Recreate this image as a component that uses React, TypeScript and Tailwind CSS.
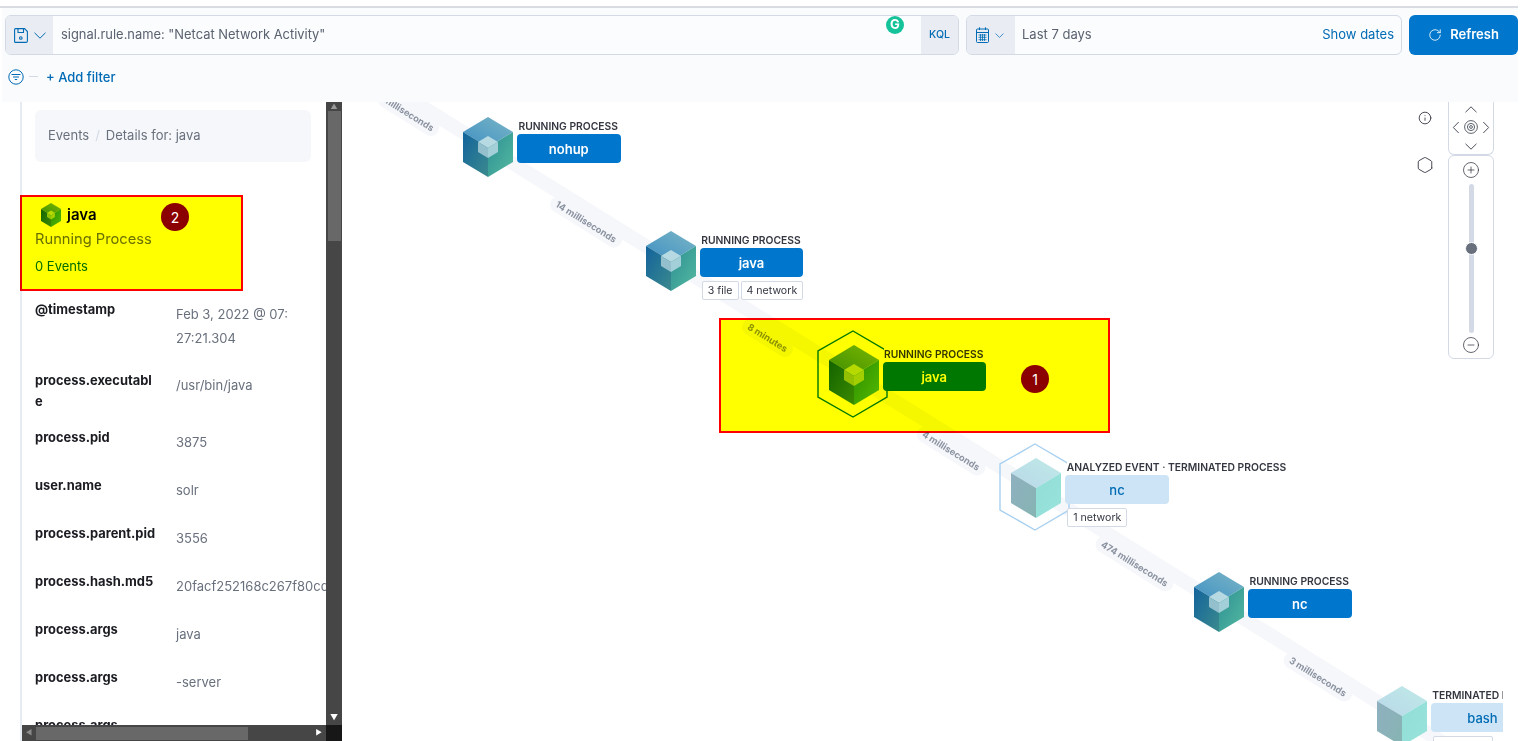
import { RotateCw, Info, Hexagon, CirclePlus, CircleMinus } from "lucide-react";

const details = [
  { label: "@timestamp", value: "Feb 3, 2022 @ 07:27:21.304", row: "h-[71px]", val: "w-[118px] break-all" },
  { label: "process.executable", value: "/usr/bin/java", row: "h-[57px]", val: "" },
  { label: "process.pid", value: "3875", row: "h-[48px]", val: "" },
  { label: "user.name", value: "solr", row: "h-[48px]", val: "" },
  { label: "process.parent.pid", value: "3556", row: "h-[48px]", val: "" },
  { label: "process.hash.md5", value: "20facf252168c267f80cd", row: "h-[48px]", val: "whitespace-nowrap" },
  { label: "process.args", value: "java", row: "h-[48px]", val: "" },
  { label: "process.args", value: "-server", row: "h-[48px]", val: "" },
  { label: "process.args", value: "-Xms512m", row: "h-[48px]", val: "" },
];

const palettes: any = {
  running: { top: ["#3f8fc3", "#7ab6c6"], left: ["#12639c", "#3b8a8e"], right: ["#2c8f94", "#55b9a0"], core: true },
  terminated: { top: ["#b9d8ea", "#bfeae6"], left: ["#8fb0c0", "#86b4b2"], right: ["#92dfd8", "#98e2da"], core: false },
};

function Cube({ id, kind, className }: { id: string; kind: string; className?: string }) {
  const p = palettes[kind];
  return (
    <svg viewBox="0 0 50 60" className={className}>
      <defs>
        <linearGradient id={id + "t"} x1="0" y1="1" x2="1" y2="0">
          <stop offset="0" stopColor={p.top[0]} />
          <stop offset="1" stopColor={p.top[1]} />
        </linearGradient>
        <linearGradient id={id + "l"} x1="0" y1="0" x2="1" y2="1">
          <stop offset="0" stopColor={p.left[0]} />
          <stop offset="1" stopColor={p.left[1]} />
        </linearGradient>
        <linearGradient id={id + "r"} x1="0" y1="0" x2="1" y2="1">
          <stop offset="0" stopColor={p.right[0]} />
          <stop offset="1" stopColor={p.right[1]} />
        </linearGradient>
      </defs>
      <path d="M25 0 L50 15 L25 30 L0 15 Z" fill={`url(#${id}t)`} />
      <path d="M0 15 L25 30 L25 60 L0 45 Z" fill={`url(#${id}l)`} />
      <path d="M50 15 L25 30 L25 60 L50 45 Z" fill={`url(#${id}r)`} />
      {p.core && (
        <g>
          <path d="M25 19 L35 25 L25 31 L15 25 Z" fill="#b6d9e2" />
          <path d="M15 25 L25 31 L25 41 L15 35 Z" fill="#93c0cc" />
          <path d="M35 25 L25 31 L25 41 L35 35 Z" fill="#a3cfd8" />
        </g>
      )}
    </svg>
  );
}

function Node({ id, pos, kind, label, name, badges, ring, dim }: any) {
  return (
    <div className={"absolute flex " + pos}>
      {ring && (
        <svg viewBox="0 0 74 90" className="absolute left-[-13px] top-[-15px] h-[90px] w-[74px]" fill="none" stroke={ring} strokeWidth="1.4">
          <path d="M37 1 L71 21 L71 67 L37 87 L2 67 L2 21 Z" />
        </svg>
      )}
      <Cube id={id} kind={kind} className="relative h-[60px] w-[50px] shrink-0" />
      <div className="relative ml-[4px] flex w-[103.5px] flex-col items-start">
        <span className="ml-[1.5px] mt-[2px] h-[15px] whitespace-nowrap bg-white text-[10.3px] font-semibold leading-[15px] text-[#343741]">{label}</span>
        <div className={"flex h-[29px] w-[103.5px] items-center justify-center rounded-[4px] pt-[2px] text-[13px] " + (dim ? "bg-[#cce4f5] font-medium text-[#006bb4]" : "bg-[#0077cc] font-semibold text-white")}>
          {name}
        </div>
        {badges && (
          <div className="ml-[2px] mt-[4px] flex gap-[2px]">
            {badges.map((b: string) => (
              <span key={b} className="h-[19px] whitespace-nowrap rounded-[2px] border border-[#d3dae6] bg-white px-[5px] text-[10.6px] leading-[17px] text-[#343741]">{b}</span>
            ))}
          </div>
        )}
      </div>
    </div>
  );
}

function EdgeLabel({ text, pos }: { text: string; pos: string }) {
  return (
    <span className={"absolute rotate-[32deg] whitespace-nowrap rounded-full bg-[#f5f7fa] px-[6px] text-[9.3px] font-bold leading-[16px] text-[#8c93a1] " + pos}>
      {text}
    </span>
  );
}

function Chev({ className }: { className: string }) {
  return (
    <svg viewBox="0 0 12 7" className={className} fill="none" stroke="currentColor" strokeWidth="1">
      <path d="M0.5 6.2 L6 0.8 L11.5 6.2" />
    </svg>
  );
}

export default function App() {
  return (
    <div className="relative h-[741px] w-[1528px] overflow-hidden bg-white font-['Inter',sans-serif]">
      <div className="h-[6px]" />
      <div className="ml-0 h-[2px] w-[1518px] bg-[#d9dce3]" />

      {/* query bar */}
      <div className="relative ml-[2px] h-[94px] w-[1516px] bg-[#fafbfd] pl-[3px] pt-[7px]">
        <div className="flex gap-[7px]">
          <div className="flex h-[40px] w-[954px] overflow-hidden rounded-[6px] border border-[#d3dae6] bg-[#fbfcfd]">
            <div className="flex w-[47px] items-center gap-[6px] bg-[#e9edf3] pl-[8px] text-[#006bb4]">
              <svg viewBox="0 0 14 15" className="h-[15px] w-[14px]" fill="none" stroke="currentColor" strokeWidth="1.1">
                <path d="M1.5 0.6 H10.5 L13.4 3.5 V13 Q13.4 14.4 12 14.4 H1.5 Q0.6 14.4 0.6 13.4 V1.6 Q0.6 0.6 1.5 0.6 Z" />
                <path d="M4 0.6 V4.5 H9.5 V0.6" />
                <circle cx="6.8" cy="10" r="1.3" />
              </svg>
              <Chev className="h-[7px] w-[12px] rotate-180" />
            </div>
            <div className="flex flex-1 items-center pl-[8px] text-[12.9px] text-[#5a6270]">signal.rule.name: "Netcat Network Activity"</div>
            <div className="flex w-[37px] items-center justify-center bg-[#e9edf3] text-[10.5px] font-medium text-[#006bb4]">KQL</div>
          </div>
          <div className="flex h-[40px] w-[436px] overflow-hidden rounded-[6px] border border-[#d3dae6] bg-[#fbfcfd]">
            <div className="flex w-[48px] items-center gap-[6px] bg-[#e9edf3] pl-[9px] text-[#006bb4]">
              <svg viewBox="0 0 13 16" className="h-[16px] w-[13px]" fill="none" stroke="currentColor" strokeWidth="1">
                <rect x="0.5" y="2" width="12" height="13.5" rx="1" />
                <path d="M0.5 5.5 H12.5 M3.5 0.3 V3 M9.5 0.3 V3" />
                <path d="M2.5 8 H10.5 M2.5 10.3 H10.5 M2.5 12.7 H10.5 M4.5 7 V14 M6.5 7 V14 M8.5 7 V14" strokeWidth="0.8" />
              </svg>
              <Chev className="h-[5px] w-[9px] rotate-180" />
            </div>
            <div className="flex flex-1 items-center justify-between px-[7px] text-[13px]">
              <span className="text-[#5a6270]">Last 7 days</span>
              <span className="text-[#006bb4]">Show dates</span>
            </div>
          </div>
          <button className="flex h-[40px] w-[109px] items-center justify-center gap-[8px] rounded-[6px] bg-[#0077cc] text-[13px] font-semibold text-white">
            <RotateCw size={14} strokeWidth={1.4} />
            Refresh
          </button>
        </div>
        <div className="ml-[3px] mt-[11px] flex items-center">
          <svg viewBox="0 0 16 16" className="h-[16px] w-[16px] text-[#006bb4]" fill="none" stroke="currentColor" strokeWidth="1">
            <circle cx="8" cy="8" r="7.2" />
            <path d="M3.5 5.5 H12.5 M5 8 H11 M6.8 10.5 H9.2" />
          </svg>
          <div className="ml-[5px] h-[1px] w-[9px] bg-[#d3dae6]" />
          <span className="ml-[8px] mt-[2px] text-[13px] font-medium text-[#006bb4]">+ Add filter</span>
        </div>
        <div className="absolute left-[884px] top-[8px] flex h-[18px] w-[18px] items-center justify-center rounded-full bg-[#15c39a] text-[13px] font-bold text-white">G</div>
      </div>

      <div className="flex h-[639px]">
        {/* process detail panel */}
        <div className="relative ml-[20px] flex h-[639px] w-[322px] shrink-0 flex-col border-l-2 border-[#e6ebf3]">
          <div className="flex h-[623px]">
            <div className="w-[304px] overflow-hidden pl-[13px]">
              <div className="mt-[8px] flex h-[52px] w-[276px] items-center rounded-[6px] bg-[#f5f7fa] pl-[13px] text-[13px] text-[#69707d]">
                Events
                <span className="mx-[6px] text-[#d3dae6]">/</span>
                Details for: java
              </div>
              <div className="mt-[41px] flex h-[24px] items-center pl-[6px]">
                <Cube id="panel" kind="running" className="h-[24px] w-[20px]" />
                <span className="ml-[6px] text-[15px] font-semibold text-black">java</span>
              </div>
              <div className="mt-[2px] text-[14.7px] leading-[20px] text-[#69707d]">Running Process</div>
              <div className="mt-[9px] text-[13px] leading-[16px] text-[#006bb4]">0 Events</div>
              <div className="mt-[24px] w-[291px]">
                {details.map((d, i) => (
                  <div key={i} className={"flex " + d.row}>
                    <div className="mt-[1px] w-[122px] shrink-0 break-all text-[12.9px] font-bold leading-[21px] text-[#1a1c21]">{d.label}</div>
                    <div className={"ml-[19px] mt-[4px] text-[13px] leading-[24px] text-[#69707d] " + d.val}>{d.value}</div>
                  </div>
                ))}
              </div>
            </div>
            {/* vertical scrollbar */}
            <div className="flex w-[16px] shrink-0 flex-col items-center bg-[#464646]">
              <div className="h-[9px] w-full text-center text-[7px] leading-[9px] text-[#9a9a9a]">▲</div>
              <div className="h-[130px] w-[13px] bg-[#686868]" />
              <div className="flex-1" />
              <div className="h-[16px] w-full text-center text-[8px] leading-[16px] text-white">▼</div>
            </div>
          </div>
          {/* horizontal scrollbar */}
          <div className="flex h-[16px] shrink-0 items-center bg-[#464646]">
            <div className="w-[14px] text-center text-[7px] text-[#8a8a8a]">◀</div>
            <div className="h-[13px] w-[212px] bg-[#686868]" />
            <div className="flex-1 pr-[4px] text-right text-[7px] text-white">▶</div>
            <div className="h-[16px] w-[16px] bg-[#171717]" />
          </div>
          <div className="absolute left-[-2px] top-[93px] h-[96px] w-[223px] border-2 border-[#ff0000] bg-[#ffff00] mix-blend-multiply" />
          <div className="absolute left-[139px] top-[101px] flex h-[28px] w-[28px] items-center justify-center rounded-full bg-[#8b0000] text-[14px] text-white">2</div>
        </div>

        {/* resolver graph */}
        <div className="relative h-[639px] w-[1161px] shrink-0 overflow-hidden">
          <svg viewBox="0 0 1161 639" className="absolute left-0 top-0 h-[639px] w-[1161px]">
            <path d="M18 -34 L1100 640" stroke="#f5f7fa" strokeWidth="14" />
          </svg>
          <EdgeLabel text="milliseconds" pos="left-[32px] top-[4px]" />
          <EdgeLabel text="14 milliseconds" pos="left-[203px] top-[112px]" />
          <EdgeLabel text="8 minutes" pos="left-[397px] top-[228px]" />
          <EdgeLabel text="4 milliseconds" pos="left-[570px] top-[341px]" />
          <EdgeLabel text="474 milliseconds" pos="left-[748px] top-[454px]" />
          <EdgeLabel text="3 milliseconds" pos="left-[937px] top-[567px]" />

          <Node id="n1" pos="left-[121px] top-[15px]" kind="running" label="RUNNING PROCESS" name="nohup" />
          <Node id="n2" pos="left-[303.75px] top-[129px]" kind="running" label="RUNNING PROCESS" name="java" badges={["3 file", "4 network"]} />
          <Node id="n3" pos="left-[486.5px] top-[243px]" kind="running" label="RUNNING PROCESS" name="java" ring="#0077cc" />
          <Node id="n4" pos="left-[669.25px] top-[356px]" kind="terminated" label="ANALYZED EVENT · TERMINATED PROCESS" name="nc" dim ring="#a8d0f0" badges={["1 network"]} />
          <Node id="n5" pos="left-[852px] top-[470px]" kind="running" label="RUNNING PROCESS" name="nc" />
          <Node id="n6" pos="left-[1034.75px] top-[584px]" kind="terminated" label="TERMINATED PROCESS" name="bash" dim badges={["1 network"]} />

          <div className="absolute left-[377px] top-[216px] h-[115px] w-[391px] border-2 border-[#ff0000] bg-[#ffff00] mix-blend-multiply" />
          <div className="absolute left-[679px] top-[263px] flex h-[28px] w-[28px] items-center justify-center rounded-full bg-[#8b0000] text-[14px] text-white">1</div>

          {/* zoom controls */}
          <Info size={14} strokeWidth={1.5} className="absolute left-[1076px] top-[9px] text-[#343741]" />
          <Hexagon size={18} strokeWidth={1.2} className="absolute left-[1074px] top-[54px] text-[#343741]" />
          <div className="absolute left-[1106px] top-0 flex h-[53px] w-[46px] flex-col items-center rounded-b-[6px] border border-t-0 border-[#d3dae6] bg-white pt-[4px] text-[#4a4f5a]">
            <Chev className="h-[7px] w-[12px] shrink-0" />
            <div className="mt-[5px] flex h-[18px] shrink-0 items-center gap-[2px]">
              <Chev className="h-[7px] w-[12px] -rotate-90" />
              <svg viewBox="0 0 14 14" className="h-[14px] w-[14px]" fill="none" stroke="currentColor" strokeWidth="0.9">
                <circle cx="7" cy="7" r="6.4" />
                <circle cx="7" cy="7" r="3.6" />
                <circle cx="7" cy="7" r="1.4" />
              </svg>
              <Chev className="h-[7px] w-[12px] rotate-90" />
            </div>
            <Chev className="mt-[7px] h-[7px] w-[12px] shrink-0 rotate-180" />
          </div>
          <div className="absolute left-[1106px] top-[53px] flex h-[204px] w-[46px] flex-col items-center rounded-[6px] border border-[#d3dae6] bg-white pt-[5px] text-[#343741]">
            <CirclePlus size={18} strokeWidth={1} />
            <div className="relative mt-[5px] h-[149px] w-[5px] shrink-0 rounded-full bg-[#d3dae6]">
              <div className="absolute left-[-4px] top-[58px] h-[13px] w-[13px] rounded-full border border-white bg-[#69707d]" />
            </div>
            <CircleMinus size={18} strokeWidth={1} className="mt-[3px]" />
          </div>
        </div>
      </div>
    </div>
  );
}
